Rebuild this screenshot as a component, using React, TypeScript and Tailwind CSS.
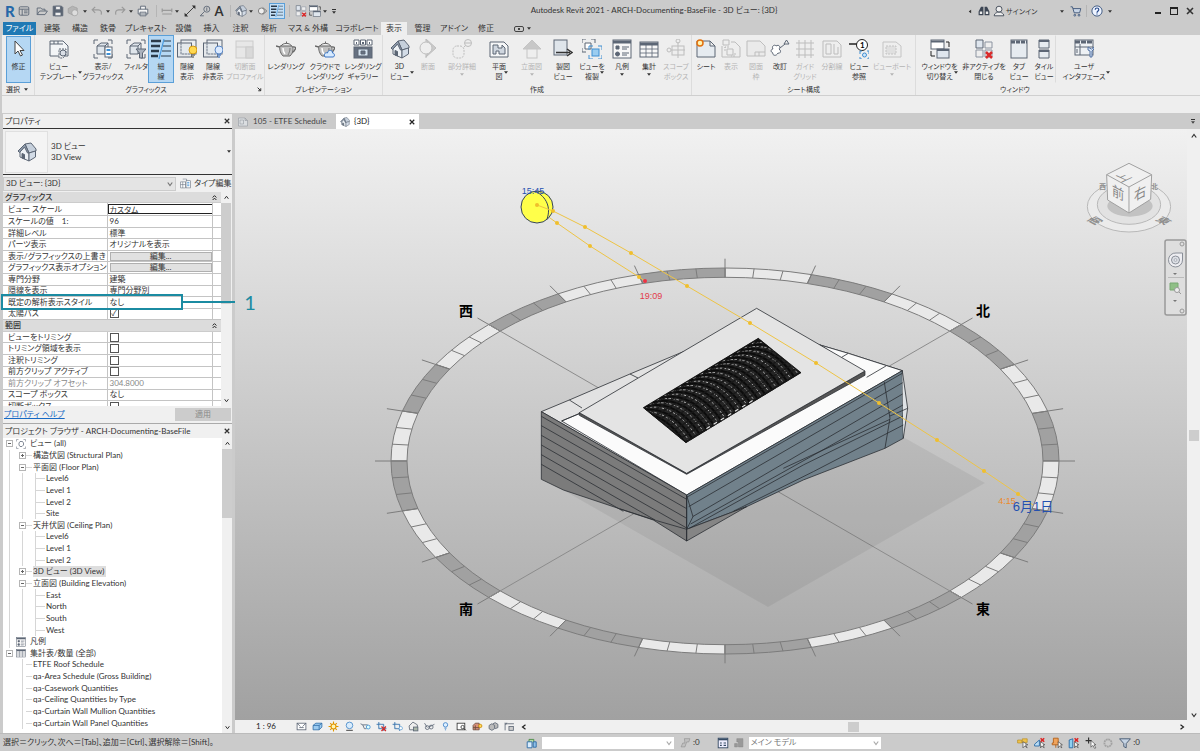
import type { ReactNode } from 'react';
import clsx from 'clsx';

const D = '#5c6675';
const B = '#3f8fd2';

const HOUSE = (
    <g stroke={D} strokeWidth="1" strokeLinejoin="round">
        <path d="M3 10 L8 4 L12 10 V19 L3 15 Z" fill="#eef2f6" />
        <path d="M8 2 L14 1 L19 7 V9 L12 11 Z" fill="#c6d0dc" />
        <path d="M1 9 L8 2 L12 11 L10.500 11 L7.500 5 L2.500 10.500 Z" fill="#8f9cac" />
        <path d="M12 11 V19 L18.500 15 V9 Z" fill="#d3dce7" />
        <path d="M5 11.500 L7.500 12.500 V17 L5 16 Z" fill={D} />
    </g>
);
const TEAPOT = (
    <g stroke="#666" strokeWidth="1" fill="none">
        <path d="M0 7 L4 8 L7 14 M17 8 C21 7 20 12 15 14" strokeWidth="1.400" />
        <path d="M4 7 C3 11 5 15 7 17 H14 C17 14 18 10 16 7 Z" fill="#c0c0c0" />
        <path d="M5 7 C7 3.500 14 3.500 15.500 7 M10.500 4.500 V2.500" />
        <path d="M7 9 C7 12 8 14 9 15" stroke="#fff" strokeWidth="1.500" />
        <path d="M14 9 C14 12 13 14 12 16" stroke="#777" />
    </g>
);
const CORNERS = <path d="M1 5 V1 H5 M15 1 H19 V5 M19 15 V19 H15 M5 19 H1 V15" fill="none" stroke={D} />;
const CUBE = (
    <g stroke={D} strokeLinejoin="round">
        <path d="M4 7 L8 4 H15 V12 L12 15 H4 Z" fill="#dfe5eb" />
        <path d="M4 7 H12 V15 M12 7 L15 4" fill="none" />
    </g>
);
const FRAMES = (
    <g stroke={D}>
        <rect x="4" y="1" width="15" height="14" fill="#eceff2" />
        <rect x="0.500" y="4" width="14" height="14" fill="#dfe4ea" fillOpacity="0.600" />
        <path d="M4 4 V15 H14" stroke="#8a93a0" strokeDasharray="2 1" fill="none" />
    </g>
);
const SHEET = <path d="M1 2 H14 L19 7 V18 H1 Z M14 2 V7 H19" fill="#e6ebf0" stroke={D} />;

const icons: Record<string, ReactNode> = {
    cursor: <path d="M6 2 V15 L9 12 L11.500 17 L13.500 16 L11 11.500 H15 Z" fill="#fff" stroke="#444" />,
    template: (
        <g stroke={D}>
            <path d="M1 2 H14 L19 7 V17 H1 Z" fill="#f3f5f7" />
            <path d="M1 5 H14 M5 2 V5 M9 2 V5" />
            <path d="M10 10 H17 V16 L14 19 H10 Z" fill="#eee" strokeDasharray="2 1" />
            <circle cx="14" cy="14" r="3" fill="#d9dee5" />
        </g>
    ),
    visibility: <>{CORNERS}{CUBE}<rect x="12" y="8" width="7" height="10" fill="#fff" stroke={D} /><path d="M13.500 10 H17.500 V12 H13.500 Z M13.500 14 H17.500 V16 H13.500 Z" fill={B} /></>,
    filter: <>{CORNERS}{CUBE}<path d="M10 10 H20 L16.500 14 V19 H13.500 V14 Z" fill="#aab2bd" stroke={D} /></>,
    thin: (
        <>
            <path d="M0 2 H10 M0 7 H9 M0 12 H8 M0 17 H7" stroke="#2b3a4a" strokeWidth="2.500" />
            <path d="M13 2 H20 M12 7 H20 M11 12 H20 M10 17 H20" stroke="#2b3a4a" strokeWidth="1" />
            <path d="M13 0 L8 20" stroke="#4a9be0" strokeWidth="1.200" />
        </>
    ),
    hiddenOn: <>{FRAMES}<circle cx="16" cy="11" r="4" fill="#ffd84f" stroke="#d29a14" /><path d="M14 16 H18 M15 18 H17" stroke="#777" strokeWidth="1.500" /></>,
    hiddenOff: <>{FRAMES}<circle cx="16" cy="11" r="4" fill="#dbeaff" stroke="#5b87c4" /><path d="M14 16 H18 M15 18 H17" stroke="#5b87c4" strokeWidth="1.500" /></>,
    profile: <g stroke="#999"><rect x="1" y="2" width="17" height="17" fill="#ddd" /><path d="M1 8 H11 V19 M11 8 H18" fill="none" /><rect x="11" y="8" width="7" height="11" fill="#bbb" /></g>,
    teapot: TEAPOT,
    cloudTeapot: <>{TEAPOT}<path d="M10 18 C8 15 11 13 12.500 14 C13 10 18 11 17.500 14 C20 14 20 18 18 18 Z" fill="#d6eaff" stroke="#3a75c4" /></>,
    gallery: (
        <g stroke={D}>
            <path d="M1 1 H6 V6 H1 Z M7.500 1 H12.500 V6 H7.500 Z M14 1 H19 V6 H14 Z" fill="#fff" />
            <path d="M3 4 H4 M9 4 H11 M16 4 H17" strokeWidth="2" />
            <rect x="1" y="8" width="18" height="11" fill="#667181" />
            <rect x="5" y="10" width="10" height="7" fill="#d6e4f0" />
            <path d="M8 12 H12 V15 H8 Z" fill="#667181" />
        </g>
    ),
    house: HOUSE,
    section: <g stroke="#777"><path d="M8 0 L18 9 L8 18 L12 9 Z" fill="#999" /><circle cx="8" cy="9" r="6" fill="#eee" /><path d="M8 0 V3 M8 15 V19" /></g>,
    callout: <g stroke="#777" fill="none"><rect x="1" y="7" width="11" height="12" rx="4" strokeDasharray="2 1" /><circle cx="16" cy="4" r="3.500" /><path d="M12 8 L13.500 6.500 M13 4 H19" /></g>,
    plan: <g stroke={D}><path d="M1 3 H15 L19 7 V18 H1 Z" fill="#f6f7f8" /><path d="M4 6 H9 V9 H13 V6 L16 9 V15 H10 V12 H7 V15 H4 Z" fill="#cfd6df" /></g>,
    elevation: <g stroke="#888"><path d="M10 1 L19 10 H1 Z" fill="#8f8f8f" /><rect x="5" y="10" width="10" height="9" fill="#eee" /></g>,
    drafting: <><rect x="1" y="1" width="13" height="15" fill="#dfe5eb" stroke={D} /><path d="M3 13.500 H17 M14 10 L19 13.500 L14 17" stroke="#333" strokeWidth="1.500" fill="none" /></>,
    duplicate: <><path d="M0 4 V0 H4 M9 0 H13 V4 M4 13 H0 V9" fill="none" stroke={D} /><path d="M3 4 H9 V10 H3 Z" fill="#fff" stroke={D} /><path d="M7 11 V7 H11 M16 7 H20 V11 M20 16 V20 H16 M11 20 H7 V16" fill="none" stroke={B} /><rect x="10" y="10" width="7" height="7" fill="#9bcdf0" stroke={B} /></>,
    legend: <g stroke={D}><rect x="1" y="1" width="18" height="18" fill="#f7f7f7" /><path d="M1 3 H19" strokeWidth="3" /><path d="M10 8 H17 M10 10 H15 M10 14 H17 M10 16 H15" /><path d="M4 7 H7 V10 H4 Z" fill={D} /><circle cx="5.500" cy="15" r="2" fill={D} /></g>,
    schedule: <g stroke={D}><rect x="1" y="3" width="18" height="15" fill="#f7f7f7" /><path d="M1 5 H19" strokeWidth="3" /><path d="M1 10 H19 M1 14 H19 M7 5 V18 M13 5 V18" strokeWidth="0.800" /></g>,
    typeEdit: <g stroke={D} fill="#fff"><path d="M1 7 H10 V18 H1 Z M1 12 H10 M5 7 V18 M5 2 H12 V7" /><rect x="11" y="5" width="8" height="13" /><path d="M13 8 H17 M13 11 H17 M13 14 H17" stroke={B} strokeWidth="1.500" /></g>,
    scope: <g stroke="#777" fill="none"><rect x="6" y="7" width="12" height="9" /><path d="M12 3 V19 M5 11 H19" /><circle cx="12" cy="2" r="2" /><circle cx="3" cy="11" r="2" /></g>,
    sheet: <>{SHEET}<circle cx="4" cy="4" r="3" fill="#fff3b0" stroke="#e2700f" strokeWidth="1.500" /></>,
    docSheet: <>{SHEET}<path d="M4 6 H11 V14 H4 Z" fill="none" stroke={D} /></>,
    sheetView: <g stroke="#777" fill="none"><path d="M1 7 V18 H19 V8 L14 3 H10" /><path d="M2 1 H8 V6 H2 Z M4 9 V8 M6 10 H12 V16 H6 Z" /><path d="M4 12 V8 H8 M14 14 V17 H10" strokeDasharray="2 1" /></g>,
    titleBlock: <g stroke="#777"><path d="M1 2 H14 L19 7 V17 H1 Z" fill="#e5e5e5" /><path d="M9 13 H19 M9 13 V17 M13 13 V17" fill="none" /></g>,
    revision: <g stroke={D} fill="none"><path d="M3 10 C1 7 5 5 6 7 C9 5 11 8 9 10 C12 12 10 15 8 14 C6 18 2 16 3 14 C0 13 1 10 3 10 Z" fill="#fff" /><path d="M10 9 L15 5 M14 5 H19 L16.500 1 Z" /></g>,
    grid: <path d="M1 4 H19 M1 10 H19 M1 16 H19 M4 1 V19 M10 1 V19 M16 1 V19" stroke="#777" />,
    matchline: <g stroke="#777" fill="none"><path d="M1 2 H15 L19 6 V18 H1 Z" /><path d="M4 5 H9 V15 H4 Z M12 5 V15 H16 V8" /></g>,
    viewRef: <><path d="M0 5 H8" stroke="#222" strokeWidth="1.500" /><circle cx="13" cy="6" r="5.500" fill="#fff" stroke="#222" /><text x="11" y="9" fontSize="8" className="font-bold">1</text><path d="M11 15 V12 H13 M18 12 H20 V15 M20 18 V20 H18 M13 20 H11 V18" fill="none" stroke={B} /><circle cx="15.500" cy="16" r="2" fill="#cfe6fa" stroke={B} /></>,
    viewport: <g stroke="#888"><path d="M1 3 H14 L19 7 V18 H1 Z" fill="#eee" /><rect x="4" y="7" width="10" height="8" fill="#ccc" strokeDasharray="2 1" /></g>,
    switchWin: <g stroke={D}><rect x="1" y="1" width="13" height="9" fill="#fff" /><path d="M1 2.500 H14" strokeWidth="2" /><rect x="7" y="10" width="12" height="9" fill="#dfe6ee" /><path d="M7 11 H19" strokeWidth="2" /><path d="M16 3 H19 V8 M1 12 V17 H5" stroke="#222" fill="none" /></g>,
    closeWin: <g stroke="#8b93a0"><path d="M2 1 H9 V9 H2 Z" fill="#dfe6ee" stroke={D} /><path d="M11 3 H18 V9 H11 Z M2 11 H9 V18 H2 Z M11 11 H18 V18 H11 Z" fill="#eee" /><path d="M12 13 L18 19 M18 13 L12 19" stroke="#d92a2a" strokeWidth="2.500" /></g>,
    tabWin: <g stroke={D}><rect x="2" y="1" width="16" height="18" fill="#e6ebf0" /><path d="M2 3 H18" strokeWidth="3" strokeDasharray="4 1" /></g>,
    tileWin: <g stroke={D}><path d="M5 1 H15 V9 H5 Z M5 11 H15 V19 H5 Z" fill="#e6ebf0" /><path d="M5 2 H15 M5 12 H15" strokeWidth="2" /></g>,
    ui: <g stroke={D}><rect x="1" y="1" width="18" height="15" fill="#eef1f4" /><path d="M1 3 H19" strokeWidth="3" strokeDasharray="5 1" /><path d="M1 8 H19 M6 5 V16 M3 10 V14" /><path d="M14 8 V11 L16 12 V18 H18 V12 L20 10 V8 L17.500 10 Z" fill="#d4e2f4" stroke="#5573a3" /></g>,
    // quick access toolbar
    app: <g stroke={D} fill="none" strokeWidth="1.500"><rect x="2" y="3" width="16" height="14" rx="2" /><path d="M2 7 H18 M7 7 V17 M10 10 H16 M10 13 H16" /></g>,
    open: <path d="M2 16 V5 H8 L10 7 H15 V10 M2 16 L6 10 H19 L15 16 Z" fill="none" stroke={D} strokeWidth="1.500" />,
    save: <g stroke={D} strokeWidth="1.500"><path d="M2 2 H16 L18 4 V18 H2 Z" fill="#5a6472" /><path d="M6 2 H14 V8 H6 Z M5 12 H15 V18 H5 Z" fill="#eee" /></g>,
    sync: <g stroke="#999" fill="#b5b5b5"><path d="M2 6 L9 2 L17 5 V13 L10 17 L2 13 Z" /><circle cx="13" cy="13" r="5" fill="#ddd" /></g>,
    undo: <path d="M7 3 L2 8 L7 13 M3 8 H12 C17 8 18 12 17 16" fill="none" stroke="#9a9a9a" strokeWidth="2" />,
    redo: <path d="M13 3 L18 8 L13 13 M17 8 H8 C3 8 2 12 3 16" fill="none" stroke="#9a9a9a" strokeWidth="2" />,
    print: <g stroke={D} strokeWidth="1.500" fill="#f4f4f4"><path d="M6 7 V2 H14 V7 M2 7 H18 V15 H2 Z M5 12 H15 V18 H5 Z" /></g>,
    dim: <path d="M2 9 H18 M2 6 V12 M18 6 V12 M2 15 H18" fill="none" stroke="#999" strokeWidth="2" />,
    measure: <><path d="M3 17 L17 3" fill="none" stroke="#333" strokeWidth="1.500" /><path d="M1 19 V13 L7 19 Z M19 1 V7 L13 1 Z" fill="#333" /></>,
    tag: <g stroke={D} strokeWidth="1.500" fill="none"><circle cx="13" cy="7" r="5" /><path d="M9 11 L2 18 H8 M13 4 V10" /></g>,
    sectionSm: <g stroke="#777" strokeWidth="1.500"><circle cx="9" cy="10" r="5" fill="#eee" /><path d="M11 4 L18 10 L11 16" fill="none" /></g>,
    binoculars: <g fill="#3d4654"><path d="M5 3 H9 V17 H1 V11 Z M11 3 H15 L19 11 V17 H11 Z" /><path d="M3 11 H7 V15 H3 Z M13 11 H17 V15 H13 Z" fill="#eee" /></g>,
    person: <g stroke="#3d4654" strokeWidth="1.500" fill="#eee"><circle cx="10" cy="7" r="5" /><path d="M2 18 C2 13 7 13 7 12 H13 C13 13 18 13 18 18 Z" /></g>,
    cart: <g stroke="#3d5577" strokeWidth="1.500" fill="#c8d5e6"><path d="M1 3 H4 L7 13 H16 L18 6 H5" /><circle cx="8" cy="17" r="1.500" /><circle cx="15" cy="17" r="1.500" /></g>,
    help: <><circle cx="10" cy="10" r="8.500" fill="#eef4ff" stroke="#34507c" strokeWidth="1.500" /><path d="M7 8 C7 4 13 4 13 8 C13 10 10 10 10 13 M10 14 V16" fill="none" stroke="#274a8c" strokeWidth="2" /></>,
    // view control bar and status bar
    views: <>{CORNERS}<path d="M6 8 L8 5 H13 L15 8 V12 L12 15 H8 L6 12 Z" fill="none" stroke={D} strokeWidth="1.500" /></>,
    box3d: <path d="M2 8 L7 4 H18 V11 L13 16 H2 Z M2 8 H13 V16 M13 8 L18 4" fill="#9ccbf0" stroke="#2f6da8" strokeWidth="1.500" />,
    detail: <g stroke={D} strokeWidth="1.500" fill="#fff"><rect x="2" y="4" width="16" height="12" /><path d="M2 4 L8 10 M18 4 L12 10 M6 12 H14" /></g>,
    sunny: <g stroke="#e09600" strokeWidth="2"><path d="M10 1 V19 M1 10 H19 M4 4 L16 16 M16 4 L4 16" /><circle cx="10" cy="10" r="4.500" fill="#fff4b0" /></g>,
    shadow: <g stroke="#4487c7" strokeWidth="1.500"><circle cx="10" cy="8" r="6" fill="#d9ecfc" /><path d="M4 17 H16" stroke="#555" strokeWidth="2" /></g>,
    potBlue: <g fill="none" stroke="#59697c" strokeWidth="1.500"><path d="M1 5 L5 7 L8 14 H12 M5 7 H14" /><circle cx="15" cy="11" r="3.500" stroke={B} fill="#dff" /></g>,
    crop: <><path d="M5 2 V14 H19 M1 6 H14 V18" fill="#b7d9f3" stroke="#386fa6" strokeWidth="1.500" /><path d="M10 10 L18 18 M18 10 L10 18" stroke="#cf2b2b" strokeWidth="2.500" /></>,
    cropShow: <><path d="M5 2 V14 H19 M1 6 H14 V18" fill="#b7d9f3" stroke="#386fa6" strokeWidth="1.500" /><circle cx="16" cy="13" r="3" fill="#fff" stroke={B} /></>,
    lock3d: <g stroke={D} strokeWidth="1.500" fill="#eee"><path d="M2 9 L9 2 L17 7 V16 H3 Z" /><rect x="10" y="11" width="8" height="7" fill="#a9b6a9" /></g>,
    glasses: <g stroke={D} strokeWidth="1.500" fill="none"><path d="M1 4 L6 12 M9 11 L19 6" /><circle cx="6" cy="12" r="3.500" /><circle cx="13" cy="11" r="3.500" /></g>,
    bulb: <g stroke="#3a80c8" strokeWidth="1.500"><circle cx="10" cy="7" r="4" fill="#dff0ff" /><path d="M8 13 H12 M9 16 H11" /></g>,
    temp: <g stroke="#333" strokeWidth="1.500" fill="#fff"><rect x="2" y="4" width="14" height="12" /><circle cx="12" cy="11" r="3" /><path d="M14 13 L18 17" /></g>,
    analytic: <g stroke="#6b4a3a" strokeWidth="1.500" fill="#d7907c"><path d="M2 8 L6 4 H13 V16 H2 Z M6 8 V16 M2 12 H13" /><circle cx="15" cy="9" r="3" fill="#ffd75c" stroke="#c98a00" /></g>,
    displace: <g stroke={D} strokeWidth="1.500" fill="#bbb"><path d="M2 8 L7 5 L12 8 V14 L7 17 L2 14 Z M9 5 L13 3 L18 6 V12 L13 14" /></g>,
    constraint: <g stroke={D} strokeWidth="1.500" fill="#ccc"><path d="M2 3 V17 M2 5 H18 M5 3 L3 7" /><rect x="9" y="10" width="8" height="7" /></g>,
    worksets: <><path d="M5 9 V4 H13 V9" fill="#b8dba8" stroke="#4b8a45" strokeWidth="1.500" /><path d="M2 8 H10 V18 H2 Z" fill="#d9ecfc" stroke="#2b6aa5" strokeWidth="1.500" /><path d="M12 8 H17 V17 H12 Z" fill="#8fc1e8" stroke="#2b6aa5" strokeWidth="1.500" /></>,
    editable: <path d="M2 18 L5 11 H9 L8 3 H18 L16 9 H12 L9 18 Z" fill="#c0c0c0" stroke="#888" />,
    options: <g stroke="#354a63" strokeWidth="1.500"><rect x="2" y="2" width="16" height="16" fill="#eef" /><path d="M2 4 H18" strokeWidth="3" /><path d="M5 10 H8 M11 10 H15 M5 14 H8 M11 14 H15" strokeWidth="2" /></g>,
    optionOff: <path d="M3 12 H8 V18 H3 Z M7 3 H18 V18 H10 V9 H7 Z" fill="#999" stroke="#888" />,
    selLink: <><path d="M1 5 H8 V10 H1 Z M9 3 H17 V9 H9 Z" fill="#eec24d" stroke="#b48716" /><path d="M10 8 V18 L13 15 L17 18 L14 13 H18 Z" fill="#fff" stroke="#333" /></>,
    selUnder: <><path d="M1 12 L9 5 V15 H1 Z" fill="#b9dcf5" stroke="#2b6aa5" strokeWidth="1.500" /><path d="M11 2 L17 8 M17 2 L11 8" stroke="#d22" strokeWidth="2.500" /><path d="M11 8 V18 L13 15 L17 18 L15 13 H18 Z" fill="#fff" stroke="#333" /></>,
    selPin: <><path d="M4 2 H12 V10 H14 V13 H2 V10 H4 Z M8 13 V18" fill="#f0a35b" stroke="#b4611a" strokeWidth="1.500" /><path d="M12 8 V18 L14 15 L18 18 L16 13 H19 Z" fill="#fff" stroke="#333" /></>,
    selFace: <><path d="M2 5 L8 3 V18 H2 Z" fill="#8fd0f0" stroke="#2b6aa5" strokeWidth="1.500" /><path d="M11 2 L17 8 M17 2 L11 8" stroke="#d22" strokeWidth="2.500" /><path d="M11 8 V18 L13 15 L17 18 L15 13 H18 Z" fill="#fff" stroke="#333" /></>,
    drag: <><path d="M6 1 V11 M1 6 H11" stroke="#333" strokeWidth="2" /><path d="M10 6 V17 L13 14 L16 19 L18 18 L15 13 H18 Z" fill="#fff" stroke="#333" /></>,
    gear: <circle cx="10" cy="10" r="6" fill="none" stroke="#a2a2a2" strokeWidth="3" strokeDasharray="3 1" />,
    funnel: <path d="M1 3 H19 L12 11 V18 L8 16 V11 Z" fill="#c6d4e4" stroke="#41556e" strokeWidth="1.500" />,
};

const Icon = ({ name, className = 'size-3' }: { name: string; className?: string }) => (
    <svg viewBox="0 0 20 20" className={clsx('shrink-0', className)} aria-hidden="true">{icons[name]}</svg>
);

const Caret = ({ className }: { className?: string }) => (
    <svg viewBox="0 0 6 4" className={clsx('h-[3px] w-[4px] shrink-0', className)} aria-hidden="true"><path d="M0 0 H6 L3 4 Z" fill="currentColor" /></svg>
);

const Chevron = ({ d, className = 'size-[6px]' }: { d: string; className?: string }) => (
    <svg viewBox="0 0 8 8" className={clsx('shrink-0', className)} aria-hidden="true"><path d={d} fill="none" stroke="currentColor" strokeWidth="1.600" /></svg>
);
const UP = 'M1 6 L4 2 L7 6';
const DOWN = 'M1 2 L4 6 L7 2';
const CROSS = 'M1 1 L7 7 M7 1 L1 7';

type Tool = { icon: string; lines: string[]; w: string; off?: boolean; active?: boolean; caret?: 'side' | 'below' };
type Group = { name: string; w: string; tools: Tool[]; launcher?: boolean };

const groups: Group[] = [
    {
        name: 'グラフィックス', w: 'w-[230px]', launcher: true, tools: [
            { icon: 'template', lines: ['ビュー', 'テンプレート'], w: 'w-[47px]', caret: 'side' },
            { icon: 'visibility', lines: ['表示/', 'グラフィックス'], w: 'w-[42px]' },
            { icon: 'filter', lines: ['フィルタ'], w: 'w-[24px]' },
            { icon: 'thin', lines: ['細', '線'], w: 'w-[26px]', active: true },
            { icon: 'hiddenOn', lines: ['隠線', '表示'], w: 'w-[26px]' },
            { icon: 'hiddenOff', lines: ['隠線', '非表示'], w: 'w-[26px]' },
            { icon: 'profile', lines: ['切断面', 'プロファイル'], w: 'w-[38px]', off: true },
        ],
    },
    {
        name: 'プレゼンテーション', w: 'w-[118px]', tools: [
            { icon: 'teapot', lines: ['レンダリング'], w: 'w-[42px]' },
            { icon: 'cloudTeapot', lines: ['クラウドで', 'レンダリング'], w: 'w-[36px]' },
            { icon: 'gallery', lines: ['レンダリング', 'ギャラリー'], w: 'w-[40px]' },
        ],
    },
    {
        name: '作成', w: 'w-[309px]', tools: [
            { icon: 'house', lines: ['3D', 'ビュー'], w: 'w-[33px]', caret: 'side' },
            { icon: 'section', lines: ['断面'], w: 'w-[24px]', off: true },
            { icon: 'callout', lines: ['部分詳細'], w: 'w-[44px]', off: true, caret: 'below' },
            { icon: 'plan', lines: ['平面', '図'], w: 'w-[30px]', caret: 'side' },
            { icon: 'elevation', lines: ['立面図'], w: 'w-[35px]', off: true, caret: 'below' },
            { icon: 'drafting', lines: ['製図', 'ビュー'], w: 'w-[28px]' },
            { icon: 'duplicate', lines: ['ビューを', '複製'], w: 'w-[30px]', caret: 'side' },
            { icon: 'legend', lines: ['凡例'], w: 'w-[30px]', caret: 'below' },
            { icon: 'schedule', lines: ['集計'], w: 'w-[24px]', caret: 'below' },
            { icon: 'scope', lines: ['スコープ', 'ボックス'], w: 'w-[30px]', off: true },
        ],
    },
    {
        name: 'シート構成', w: 'w-[224px]', tools: [
            { icon: 'sheet', lines: ['シート'], w: 'w-[28px]' },
            { icon: 'sheetView', lines: ['表示'], w: 'w-[22px]', off: true },
            { icon: 'titleBlock', lines: ['図面', '枠'], w: 'w-[28px]', off: true },
            { icon: 'revision', lines: ['改訂'], w: 'w-[20px]' },
            { icon: 'grid', lines: ['ガイド', 'グリッド'], w: 'w-[30px]', off: true },
            { icon: 'matchline', lines: ['分割線'], w: 'w-[24px]', off: true },
            { icon: 'viewRef', lines: ['ビュー', '参照'], w: 'w-[30px]' },
            { icon: 'viewport', lines: ['ビューポート'], w: 'w-[36px]', off: true, caret: 'below' },
        ],
    },
    {
        name: 'ウィンドウ', w: 'w-[198px]', tools: [
            { icon: 'switchWin', lines: ['ウィンドウを', '切り替え'], w: 'w-[47px]', caret: 'side' },
            { icon: 'closeWin', lines: ['非アクティブを', '閉じる'], w: 'w-[42px]' },
            { icon: 'tabWin', lines: ['タブ', 'ビュー'], w: 'w-[28px]' },
            { icon: 'tileWin', lines: ['タイル', 'ビュー'], w: 'w-[22px]' },
            { icon: 'ui', lines: ['ユーザ', 'インタフェース'], w: 'w-[58px]', caret: 'side' },
        ],
    },
];

const ToolButton = ({ tool }: { tool: Tool }) => (
    <button
        type="button"
        disabled={tool.off}
        className={clsx(
            'flex h-12 shrink-0 flex-col items-center border pt-[3px] text-[7px] leading-[10px] whitespace-nowrap',
            tool.w,
            tool.active ? 'border-[#5a9fd8] bg-[#b5d7f3]' : tool.icon === 'ui' ? 'border-transparent border-l-[#dcdcdc]' : 'border-transparent',
            tool.off ? 'text-[#b4b4b4]' : 'text-[#333]',
        )}
    >
        <Icon name={tool.icon} className={clsx('mb-[2px] size-5', tool.off && 'opacity-40')} />
        {tool.lines.map((line, i) => (
            <span key={line} className="relative">
                {line}
                {tool.caret === 'side' && i === tool.lines.length - 1 && <Caret className="absolute top-0 -right-[5px]" />}
            </span>
        ))}
        {tool.caret === 'below' && <Caret className="mt-[2px]" />}
    </button>
);

const QatButton = ({ icon, w, active }: { icon: string; w: string; active?: boolean }) => (
    <button type="button" aria-label={icon} className={clsx('flex h-4 shrink-0 items-center justify-center', w, active && 'border border-[#5a9fd8] bg-[#c4dff5]')}>
        {icon === 'caret' ? <Caret /> : <Icon name={icon} />}
    </button>
);

const TitleBar = () => (
    <header className="flex h-[22px] items-center text-[#333]">
        <div className="flex w-[340px] shrink-0 items-center pl-1">
            <button type="button" className="w-[14px] text-[15px] leading-4 font-black text-[#2668a8]">R</button>
            <QatButton icon="app" w="w-[17px]" />
            <QatButton icon="open" w="w-[18px]" />
            <QatButton icon="save" w="w-[15px]" />
            <QatButton icon="sync" w="w-[15px]" />
            <QatButton icon="caret" w="w-[8px]" />
            <QatButton icon="undo" w="w-[16px]" />
            <QatButton icon="caret" w="w-[7px]" />
            <QatButton icon="redo" w="w-[16px]" />
            <QatButton icon="caret" w="w-[7px]" />
            <QatButton icon="print" w="w-[17px]" />
            <span className="mx-1 h-3 w-px bg-[#b5b5b5]" />
            <QatButton icon="dim" w="w-[13px]" />
            <QatButton icon="caret" w="w-[8px]" />
            <QatButton icon="measure" w="w-[17px]" />
            <QatButton icon="tag" w="w-[14px]" />
            <button type="button" className="w-[16px] text-[13px] leading-4 font-bold">A</button>
            <span className="mx-1 h-3 w-px bg-[#b5b5b5]" />
            <QatButton icon="house" w="w-[12px]" />
            <QatButton icon="caret" w="w-[8px]" />
            <QatButton icon="sectionSm" w="w-[14px]" />
            <QatButton icon="thin" w="w-[16px]" active />
            <span className="mx-1 h-3 w-px bg-[#b5b5b5]" />
            <QatButton icon="closeWin" w="w-[15px]" />
            <QatButton icon="switchWin" w="w-[14px]" />
            <QatButton icon="caret" w="w-[6px]" />
            <button type="button" aria-label="customize" className="flex w-[14px] flex-col items-center gap-px"><span className="h-px w-1 bg-[#333]" /><Caret /></button>
        </div>
        <h1 className="flex-1 pb-[2px] text-center text-[8px] leading-3 whitespace-nowrap">Autodesk Revit 2021 - ARCH-Documenting-BaseFile - 3D ビュー: {'{3D}'}</h1>
        <div className="flex w-[232px] shrink-0 items-center text-[7px]">
            <Caret className="mr-1 rotate-90" />
            <QatButton icon="binoculars" w="w-[15px]" />
            <QatButton icon="person" w="w-[15px]" />
            <button type="button" className="w-[52px] text-left">サインイン</button>
            <QatButton icon="caret" w="w-[8px]" />
            <QatButton icon="cart" w="w-[20px]" />
            <span className="h-3 w-px bg-[#b5b5b5]" />
            <QatButton icon="help" w="w-[20px]" />
            <QatButton icon="caret" w="w-[6px]" />
            <button type="button" aria-label="minimize" className="ml-auto flex w-4 justify-center pt-1"><span className="h-[2px] w-[6px] bg-[#222]" /></button>
            <button type="button" aria-label="maximize" className="flex w-4 justify-center"><span className="size-[8px] border border-t-2 border-[#222]" /></button>
            <button type="button" aria-label="close" className="flex w-4 justify-center"><Chevron d={CROSS} className="size-[8px]" /></button>
            <span className="w-[2px]" />
        </div>
    </header>
);

const tabs = [
    ['建築', 'w-[28px]'], ['構造', 'w-[28px]'], ['鉄骨', 'w-[28px]'], ['プレキャスト', 'w-[48px]'], ['設備', 'w-[27px]'],
    ['挿入', 'w-[29px]'], ['注釈', 'w-[29px]'], ['解析', 'w-[28px]'], ['マス & 外構', 'w-[50px]'], ['コラボレート', 'w-[48px]'],
    ['表示', 'w-[26px]'], ['管理', 'w-[31px]'], ['アドイン', 'w-[32px]'], ['修正', 'w-[32px]'],
];

const Ribbon = () => (
    <>
        <nav className="flex h-[13px] items-stretch pl-[3px] text-[8px] leading-[13px] whitespace-nowrap text-[#333]">
            <button type="button" className="mr-[2px] w-[33px] bg-[#2079b4] text-white">ファイル</button>
            {tabs.map(([name, w]) => (
                <button key={name} type="button" className={clsx('flex justify-center', w, name === '表示' && 'bg-[#eee]')}>{name}</button>
            ))}
            <button type="button" aria-label="panel state" className="ml-3 flex items-center gap-[3px]">
                <span className="flex h-[6px] w-[10px] items-center justify-center rounded-xs border border-[#444]"><span className="size-[2px] bg-[#444]" /></span>
                <Caret />
            </button>
        </nav>
        <div className="ml-[2px] flex h-[61px] border-b border-[#cfcfcf] bg-[#eee]">
            <section className="w-[33px] shrink-0 border-r border-[#dcdcdc] pl-[4px]">
                <button type="button" className="mt-px flex h-[47px] w-[25px] flex-col items-center border border-[#5a9fd8] bg-[#b5d7f3] pt-[2px] text-[7px] leading-[10px] text-[#333]">
                    <Icon name="cursor" className="mb-[2px] size-5" />修正
                </button>
                <button type="button" className="flex items-center gap-1 text-[7px] leading-3 whitespace-nowrap text-[#333]">選択 <Caret /></button>
            </section>
            {groups.map((group) => (
                <section key={group.name} className={clsx('shrink-0', group.w, group.name !== 'ウィンドウ' && 'border-r border-[#dcdcdc]')}>
                    <div className="flex h-12">
                        {group.tools.map((tool) => <ToolButton key={tool.icon} tool={tool} />)}
                    </div>
                    <div className="flex items-center justify-center text-[7px] leading-3 text-[#333]">
                        <span className="flex-1 text-center">{group.name}</span>
                        {group.launcher && <Chevron d="M1 1 L6 6 M6 2 V6 H2" className="mr-[2px] size-[5px]" />}
                    </div>
                </section>
            ))}
        </div>
        <div className="ml-[2px] h-[17px] bg-[#eee]" />
    </>
);

type Prop = { name: string; value?: string; kind?: 'head' | 'field' | 'button' | 'check' | 'checked' | 'muted' };
const props: Prop[] = [
    { name: 'グラフィックス', kind: 'head' },
    { name: 'ビュー スケール', value: 'カスタム', kind: 'field' },
    { name: 'スケールの値　1:', value: '96' },
    { name: '詳細レベル', value: '標準' },
    { name: 'パーツ表示', value: 'オリジナルを表示' },
    { name: '表示/グラフィックスの上書き', value: '編集...', kind: 'button' },
    { name: 'グラフィックス表示オプション', value: '編集...', kind: 'button' },
    { name: '専門分野', value: '建築' },
    { name: '隠線を表示', value: '専門分野別' },
    { name: '既定の解析表示スタイル', value: 'なし' },
    { name: '太陽パス', kind: 'checked' },
    { name: '範囲', kind: 'head' },
    { name: 'ビューをトリミング', kind: 'check' },
    { name: 'トリミング領域を表示', kind: 'check' },
    { name: '注釈トリミング', kind: 'check' },
    { name: '前方クリップ アクティブ', kind: 'check' },
    { name: '前方クリップ オフセット', value: '304.8000', kind: 'muted' },
    { name: 'スコープ ボックス', value: 'なし' },
    { name: '切断ボックス', kind: 'check' },
];

const PropValue = ({ prop }: { prop: Prop }) => {
    if (prop.kind === 'button') {
        return <button type="button" className="block h-[9px] w-full border border-[#b0b0b0] bg-[#e1e1e1] leading-[7px]">{prop.value}</button>;
    }
    if (prop.kind === 'check' || prop.kind === 'checked') {
        return (
            <input
                type="checkbox"
                aria-label={prop.name}
                defaultChecked={prop.kind === 'checked'}
                className="block size-[9px] appearance-none border border-[#555] bg-white leading-[7px] checked:before:block checked:before:text-center checked:before:text-[8px] checked:before:content-['✓']"
            />
        );
    }
    if (prop.kind === 'field') {
        return <input aria-label={prop.name} defaultValue={prop.value} className="-ml-[2px] block h-[10px] w-[105px] border border-[#222] bg-white pl-px leading-[8px]" />;
    }
    return <>{prop.value}</>;
};

const ScrollBar = ({ thumb }: { thumb: string }) => (
    <div className="flex w-[10px] shrink-0 flex-col items-center bg-[#f0f0f0] text-[#333]">
        <span className="flex h-[11px] items-center"><Chevron d={UP} className="size-[5px]" /></span>
        <span className={clsx('w-full bg-[#cdcdcd]', thumb)} />
        <span className="mt-auto flex h-[11px] items-center"><Chevron d={DOWN} className="size-[5px]" /></span>
    </div>
);

const Properties = () => (
    <section className="relative bg-[#f0f0f0]">
        <div className="flex h-[15px] items-center justify-between border-b border-[#333] px-[2px]">
            <h2>プロパティ</h2>
            <button type="button" aria-label="close properties"><Chevron d={CROSS} /></button>
        </div>
        <div className="flex h-[46px] items-center border-b border-[#333] pr-[1px]">
            <span className="ml-[2px] flex h-[42px] w-[43px] items-center justify-center border border-[#e0e0e0] bg-[#f4f4f4]"><Icon name="house" className="size-5" /></span>
            <div className="ml-[3px] flex-1 leading-[11px]"><p>3D ビュー</p><p>3D View</p></div>
            <button type="button" aria-label="type list"><Caret /></button>
        </div>
        <div className="flex h-[17px] items-center">
            <div className="relative w-[173px]">
                <select aria-label="view" className="block h-[14px] w-full appearance-none border border-[#ccc] bg-[#e4e4e4] pl-[2px]"><option>3D ビュー: {'{3D}'}</option></select>
                <Chevron d={DOWN} className="pointer-events-none absolute top-1 right-[3px] size-[6px] text-[#777]" />
            </div>
            <button type="button" className="ml-1 flex items-center gap-[3px]"><Icon name="typeEdit" className="size-[11px]" />タイプ編集</button>
        </div>
        <div className="flex h-[214px] overflow-hidden">
            <table className="h-[221px] w-[218px] shrink-0 table-fixed border-collapse bg-white text-left leading-[9px]">
                <colgroup><col className="w-[104px]" /><col className="w-[105px]" /><col /></colgroup>
                <tbody>
                    {props.map((prop) => prop.kind === 'head' ? (
                        <tr key={prop.name} className="bg-[#dcdcdc]">
                            <th colSpan={2} className="border-b border-[#ccc] p-0 pl-[2px] font-medium">{prop.name}</th>
                            <td className="border-b border-[#ccc] p-0 text-[#222]"><Chevron d="M1 4 L4 1 L7 4 M1 8 L4 5 L7 8" className="size-[5px]" /></td>
                        </tr>
                    ) : (
                        <tr key={prop.name} className={clsx('border-b border-[#c4c4c4]', prop.kind === 'muted' && 'text-[#888]')}>
                            <th className="overflow-hidden border-r border-[#c4c4c4] p-0 pl-[5px] font-normal whitespace-nowrap">{prop.name}</th>
                            <td className="border-r border-[#c4c4c4] p-0 pl-[2px]"><PropValue prop={prop} /></td>
                            <td className="p-0" />
                        </tr>
                    ))}
                </tbody>
            </table>
            <ScrollBar thumb="h-[101px]" />
        </div>
        <div className="flex h-[17px] items-center justify-between pr-px">
            <a href="#help" className="pl-px text-[#1769c4] underline">プロパティ ヘルプ</a>
            <button type="button" disabled className="h-[13px] w-[56px] bg-[#ccc] text-[#888]">適用</button>
        </div>
        {/* callout */}
        <div className="absolute top-[180px] -left-[2px] h-4 w-[182px] border-2 border-[#1b8ba2]" />
        <div className="absolute top-[187px] left-[180px] h-[2px] w-[52px] bg-[#1b8ba2]" />
    </section>
);

type Node = { label: string; depth: 0 | 1 | 2; sign?: '+' | '-'; icon?: string; selected?: boolean };
const tree: Node[] = [
    { label: 'ビュー (all)', depth: 0, sign: '-', icon: 'views' },
    { label: '構造伏図 (Structural Plan)', depth: 1, sign: '+' },
    { label: '平面図 (Floor Plan)', depth: 1, sign: '-' },
    { label: 'Level6', depth: 2 }, { label: 'Level 1', depth: 2 }, { label: 'Level 2', depth: 2 }, { label: 'Site', depth: 2 },
    { label: '天井伏図 (Ceiling Plan)', depth: 1, sign: '-' },
    { label: 'Level6', depth: 2 }, { label: 'Level 1', depth: 2 }, { label: 'Level 2', depth: 2 },
    { label: '3D ビュー (3D View)', depth: 1, sign: '+', selected: true },
    { label: '立面図 (Building Elevation)', depth: 1, sign: '-' },
    { label: 'East', depth: 2 }, { label: 'North', depth: 2 }, { label: 'South', depth: 2 }, { label: 'West', depth: 2 },
    { label: '凡例', depth: 0, icon: 'legend' },
    { label: '集計表/数量 (全部)', depth: 0, sign: '-', icon: 'schedule' },
    { label: 'ETFE Roof Schedule', depth: 1 },
    { label: 'qa-Area Schedule (Gross Building)', depth: 1 },
    { label: 'qa-Casework Quantities', depth: 1 },
    { label: 'qa-Ceiling Quantities by Type', depth: 1 },
    { label: 'qa-Curtain Wall Mullion Quantities', depth: 1 },
    { label: 'qa-Curtain Wall Panel Quantities', depth: 1 },
];

const Guide = ({ sign }: { sign?: '+' | '-' }) => (
    <span className="flex h-full w-[13px] shrink-0 items-center justify-center">
        {sign ? (
            <svg viewBox="0 0 7 7" className="size-[7px]" aria-hidden="true">
                <rect x="0.500" y="0.500" width="6" height="6" fill="#fff" stroke="#b5b5b5" />
                <path d={sign === '+' ? 'M2 3.500 H5 M3.500 2 V5' : 'M2 3.500 H5'} stroke="#666" />
            </svg>
        ) : <span className="h-full w-px bg-[#d6d6d6]" />}
    </span>
);

const Browser = () => (
    <section className="flex min-h-0 flex-1 flex-col border-t border-[#aaa] bg-[#f0f0f0]">
        <div className="flex h-[14px] items-center justify-between px-[2px]">
            <h2>プロジェクト ブラウザ - ARCH-Documenting-BaseFile</h2>
            <button type="button" aria-label="close browser"><Chevron d={CROSS} /></button>
        </div>
        <div className="flex min-h-0 flex-1 bg-white">
            <ul className="flex h-[291px] flex-1 flex-col">
                {tree.map((node, i) => (
                    <li key={i} className="flex min-h-0 flex-1 items-center whitespace-nowrap">
                        {node.depth === 0 && <Guide sign={node.sign} />}
                        {node.depth > 0 && <>{i < 19 ? <Guide /> : <span className="w-[13px]" />}<Guide sign={node.sign} /></>}
                        {node.depth === 2 && <Guide />}
                        {node.icon && <Icon name={node.icon} className="mr-[4px] size-[10px]" />}
                        {node.depth > 0 && <span className={clsx('mr-px h-px bg-[#d6d6d6]', node.depth === 2 ? '-ml-[6px] w-[9px]' : '-ml-[3px] w-[6px]')} />}
                        <span className={clsx(node.selected && 'bg-[#dedede] pr-[2px]')}>{node.label}</span>
                    </li>
                ))}
            </ul>
            <ScrollBar thumb="h-[69px]" />
        </div>
    </section>
);

const CX = 725;
const CY = 461;
const at = (deg: number, k: number) => {
    const a = (deg * Math.PI) / 180;
    return `${(CX + 334 * k * Math.cos(a)).toFixed(1)} ${(CY - 193 * k * Math.sin(a)).toFixed(1)}`;
};

const CompassRing = () => (
    <g strokeWidth="1">
        {Array.from({ length: 24 }, (_, i) => (
            <path
                key={i}
                d={`M${at(i * 15, 1)} A334 193 0 0 0 ${at(i * 15 + 15, 1)} L${at(i * 15 + 15, 0.952)} A318 184 0 0 1 ${at(i * 15, 0.952)} Z`}
                fill={i % 2 ? '#e9e9e9' : '#a1a1a1'}
                stroke="#7c7c7c"
            />
        ))}
        {Array.from({ length: 72 }, (_, i) => (
            <path key={i} d={`M${at(i * 5, 0.952)} L${at(i * 5, i % 3 ? 1 : 1.048)}`} stroke="#7c7c7c" />
        ))}
        <path d={`M${at(45, 1)} L${at(225, 1)} M${at(135, 1)} L${at(315, 1)}`} stroke="#8c8c8c" />
    </g>
);

const Panels = () => (
    <g>
        <clipPath id="panel"><path d="M715 145 L843 248 L498 458 L370 353 Z" /></clipPath>
        <path d="M715 145 L843 248 L498 458 L370 353 Z" fill="#262626" stroke="#111" />
        <g clipPath="url(#panel)" fill="none">
            {Array.from({ length: 32 }, (_, i) => {
                const x = 190 + i * 22;
                const y = 460 - i * 13;
                return (
                    <g key={i}>
                        <path d={`M${x} ${y} Q${x + 110} ${y - 30} ${x + 190} ${y + 130}`} stroke="#b4b4b4" strokeWidth="3" strokeDasharray="7 5" />
                        <path d={`M${x + 10} ${y - 6} Q${x + 120} ${y - 36} ${x + 200} ${y + 124}`} stroke="#0c0c0c" strokeWidth="6" />
                    </g>
                );
            })}
            {Array.from({ length: 10 }, (_, i) => (
                <path key={i} d={`M${376 + i * 13} ${358 + i * 11} l345 -208`} stroke="#181818" strokeWidth="4" />
            ))}
            <path d="M560 417 L700 332" stroke="#e8e8e8" strokeWidth="6" strokeDasharray="12 13" />
            <path d="M370 353 L715 145 L843 248 L498 458 Z" stroke="#151515" strokeWidth="5" />
        </g>
    </g>
);

// traced on a grid three times finer than the canvas
const Building = () => (
    <g transform="translate(520 290) scale(0.3333)" stroke="#2b2f33" strokeWidth="2.400" strokeLinejoin="round">
        <path d="M64 365 L148 330 L330 252 L490 185 L710 140 L900 165 L985 190 L1147 242 L500 615 Z" fill="#e2e2e2" />
        <path d="M500 615 L125 393 L180 370 L500 550 L1035 250 L900 165 L985 190 L1147 242 Z" fill="#fbfbfb" />
        <path d="M148 330 L186 354 M330 252 L354 264 M985 190 L965 202 M1098 228 L1040 262 M125 393 L180 370" fill="none" />
        <path d="M64 365 L500 615 V753 L400 690 L130 600 L64 568 Z" fill="#7b7b7b" />
        <path d="M500 615 L1147 242 L1150 445 L1095 475 L850 570 L680 650 L500 718 Z" fill="#71818b" />
        <path d="M500 718 L680 650 L500 753 Z" fill="#858585" />
        <path d="M1147 242 L1163 355 L1150 445" fill="#dfe3e6" />
        <path d="M64 379 L500 628 M64 407 L500 656 M64 436 L500 685 M64 465 L500 714 M64 494 L405 690 M64 523 L310 664 M300 657 L410 692 L500 718" fill="none" />
        <path d="M500 622 L1147 250 M506 650 L1148 278 M518 680 L1148 312 M512 702 L1149 345 M508 715 L850 525 L1149 378 M640 664 L880 545 L1150 405 M500 616 L519 680 L500 718 V753 M500 616 V718 M1093 276 L1110 385 L1095 475 M1110 378 L1163 355 M790 535 L1110 388" fill="none" />
        <path d="M178 368 V376 L500 553 L1035 256 V243 L500 550 Z" fill="#555" />
        <path d="M710 55 L1035 243 L500 550 L178 368 Z" fill="#e4e4e4" />
        <Panels />
    </g>
);

const path1 = [[537, 205], [553, 211], [585, 227], [631, 253], [687, 286], [750, 323], [816, 363], [879, 403], [937, 440], [984, 471], [1018, 494]];
const path2 = [[557, 223], [590, 246], [639, 277]];

const SunPath = () => (
    <g>
        <circle cx="537" cy="207" r="16" fill="#ffff4a" stroke="#34435c" />
        <path d="M535 191 C547 197 551 208 547 219" fill="none" stroke="#34435c" />
        <path d={`M${path1.map((p) => p.join(' ')).join(' L')} L1033 505 M550 218 L${path2.map((p) => p.join(' ')).join(' L')} L645 281`} fill="none" stroke="#eec444" />
        {[...path1, ...path2].map(([x, y]) => <circle key={x} cx={x} cy={y} r="2" fill="#f0bf2c" />)}
        <circle cx="645" cy="281" r="2" fill="#ee3344" />
        <g textAnchor="middle" fontSize="9" className="font-['Liberation_Sans','Noto_Sans_CJK_JP',sans-serif]">
            <text x="533" y="194" fill="#2450b0">15:45</text>
            <text x="651" y="299" fill="#e23a4a">19:09</text>
            <text x="1007" y="504" fill="#ee8a2a">4:15</text>
            <text x="1033" y="511" fill="#2450b0" fontSize="13">6月1日</text>
        </g>
    </g>
);

const ViewCube = () => (
    <g transform="translate(900 140) scale(0.3333)" stroke="#a0a0a0" strokeWidth="3" strokeLinejoin="round">
        <ellipse cx="687" cy="200" rx="125" ry="76" fill="#ebebeb" stroke="#b8b8b8" />
        <ellipse cx="687" cy="194" rx="95" ry="59" fill="#e2e2e2" stroke="#b8b8b8" />
        <ellipse cx="690" cy="198" rx="68" ry="32" fill="#c2c2c2" stroke="none" />
        <path d="M687 70 L755 104 L752 178 L687 219 L623 180 L620 104 Z" fill="#f0f0f0" />
        <path d="M620 104 L687 141 L755 104 M687 141 V219" fill="none" />
        <g stroke="none" fill="#868686" fontSize="42" textAnchor="middle">
            <text transform="matrix(0.87 -0.4 0.87 0.4 680 120)">上</text>
            <text transform="matrix(0.87 0.45 0 1 654 174)">前</text>
            <text transform="matrix(0.87 -0.45 0 1 720 174)">右</text>
        </g>
        <g stroke="none" fill="#8f8f8f" fontSize="32" textAnchor="middle" className="font-bold">
            <text transform="matrix(1 -0.5 0.9 0.5 596 248)">南</text>
            <text transform="matrix(1 0.5 -0.9 0.5 780 248)">東</text>
            <text x="608" y="147" fontSize="20">西</text>
            <text x="764" y="147" fontSize="20">北</text>
        </g>
    </g>
);

const NavBar = () => (
    <g stroke="#999" fill="none">
        <rect x="1165" y="240" width="21" height="75" rx="2" fill="#dedede" strokeWidth="1.500" />
        <circle cx="1182" cy="244" r="2" />
        <circle cx="1182" cy="311" r="2" />
        <path d="M1176 253 H1182.500 V260 A7 7 0 1 1 1176 253 Z" fill="#eeeef2" stroke="#8a8f98" />
        <circle cx="1175.500" cy="260" r="4" fill="#dfe2e8" stroke="#8a8f98" />
        <circle cx="1175.500" cy="260" r="1.500" stroke="#b0b4bb" />
        <path d="M1173 273 H1177 L1175 275 Z M1173 300 H1177 L1175 302 Z" fill="#777" stroke="none" />
        <path d="M1168 277.500 H1184" stroke="#bbb" />
        <path d="M1170 283 H1178 V290 H1170 Z" fill="#8fbf86" stroke="#79a872" />
        <circle cx="1177" cy="290" r="2.500" fill="#eee" />
        <path d="M1179 292 L1181 294" />
    </g>
);

const Viewport = () => (
    <svg viewBox="235 129 952 591" className="block min-h-0 w-full flex-1 bg-gradient-to-b from-[#f1f1f1] to-[#a1a1a1]" role="img" aria-label="3D view">
        <CompassRing />
        <path d="M563 490 L768 607 L985 483 L903 437 L686 480 Z" fill="#000" opacity="0.06" />
        <Building />
        <SunPath />
        <g fontSize="14" textAnchor="middle" fill="#000" className="font-bold">
            <text x="466" y="316">西</text>
            <text x="983" y="316">北</text>
            <text x="466" y="614">南</text>
            <text x="983" y="614">東</text>
        </g>
        <text x="250" y="310" fontSize="20" textAnchor="middle" fill="#1b8ba2">1</text>
        <ViewCube />
        <NavBar />
    </svg>
);

const viewIcons = ['detail', 'box3d', 'sunny', 'shadow', 'potBlue', 'crop', 'cropShow', 'lock3d', 'glasses', 'bulb', 'temp', 'analytic', 'displace', 'constraint'];

const Workspace = () => (
    <main className="flex min-w-0 flex-1 flex-col">
        <div className="flex h-[15px] items-stretch text-[#444]">
            <button type="button" className="flex w-[101px] items-center gap-[5px] pl-[3px] whitespace-nowrap"><Icon name="docSheet" className="size-[10px] opacity-60" />105 - ETFE Schedule</button>
            <button type="button" className="flex w-[83px] items-center gap-1 bg-white pr-1 pl-[4px] text-[#222]"><Icon name="house" className="size-[10px]" />{'{3D}'}<Chevron d={CROSS} className="ml-auto size-[6px]" /></button>
            <span className="mr-[5px] ml-auto flex flex-col items-center justify-center gap-px"><span className="h-px w-1 bg-[#333]" /><Caret /></span>
        </div>
        <div className="flex min-h-0 flex-1">
            <div className="flex min-w-0 flex-1 flex-col">
                <Viewport />
                <div className="flex h-[13px] items-center bg-[#f0f0f0] text-[#222]">
                    <button type="button" className="w-[58px] shrink-0 text-right"><span className="mr-[17px]">1 : 96</span></button>
                    {viewIcons.map((name) => <button key={name} type="button" aria-label={name} className="flex w-4 shrink-0 justify-center"><Icon name={name} className="size-[11px]" /></button>)}
                    <Chevron d="M6 1 L2 4 L6 7" className="ml-[4px] size-[6px]" />
                    <div className="mx-1 flex flex-1 justify-center"><span className="h-[10px] w-[11px] bg-[#cdcdcd]" /></div>
                    <Chevron d="M2 1 L6 4 L2 7" className="mr-[2px] size-[6px]" />
                </div>
            </div>
            <div className="flex w-[13px] flex-col items-center bg-[#f0f0f0] py-1 text-[#333]">
                <Chevron d={UP} />
                <div className="flex flex-1 items-center pt-5"><span className="h-[11px] w-[10px] bg-[#cdcdcd]" /></div>
                <Chevron d={DOWN} className="mb-[11px] size-[6px]" />
            </div>
        </div>
    </main>
);

const StatusBar = () => (
    <footer className="flex h-[18px] items-center border-t border-[#bbb] pl-[3px] text-[#333]">
        <p className="w-[521px] shrink-0">選択＝クリック、次へ＝[Tab]、追加＝[Ctrl]、選択解除＝[Shift]。</p>
        <Icon name="worksets" className="mr-[2px] ml-[2px] size-3" />
        <div className="relative ml-[2px] w-[132px]">
            <select aria-label="workset" className="block h-3 w-full appearance-none bg-white"><option /></select>
            <Chevron d={DOWN} className="pointer-events-none absolute top-[3px] right-[2px] size-[6px] text-[#aaa]" />
        </div>
        <Icon name="editable" className="mr-[2px] ml-[6px] size-[11px]" />
        <span>:0</span>
        <Icon name="options" className="ml-[17px] size-[12px]" />
        <Icon name="optionOff" className="mr-[5px] ml-[4px] size-[11px]" />
        <div className="relative w-[132px]">
            <select aria-label="design option" className="block h-3 w-full appearance-none bg-white pl-[2px] text-[#777]"><option>メイン モデル</option></select>
            <Chevron d={DOWN} className="pointer-events-none absolute top-[3px] right-[2px] size-[6px] text-[#aaa]" />
        </div>
        <div className="mr-[60px] ml-auto flex items-center">
            {['selLink', 'selUnder', 'selPin', 'selFace', 'drag', 'gear', 'funnel'].map((name) => (
                <button key={name} type="button" aria-label={name} className="flex w-[17px] justify-center"><Icon name={name} className="size-[12px]" /></button>
            ))}
            <span>:0</span>
        </div>
    </footer>
);

const App = () => (
    <div className="flex h-screen flex-col overflow-hidden bg-[#cbcbcb] font-['Lato','Noto_Sans_CJK_JP',sans-serif] text-[8px] leading-[11px] text-[#333] [font-feature-settings:'palt']">
        <TitleBar />
        <Ribbon />
        <div className="mt-px flex min-h-0 flex-1">
            <aside className="z-10 mr-[3px] ml-[3px] flex w-[229px] shrink-0 flex-col whitespace-nowrap">
                <Properties />
                <Browser />
            </aside>
            <Workspace />
        </div>
        <StatusBar />
    </div>
);

export default App;
